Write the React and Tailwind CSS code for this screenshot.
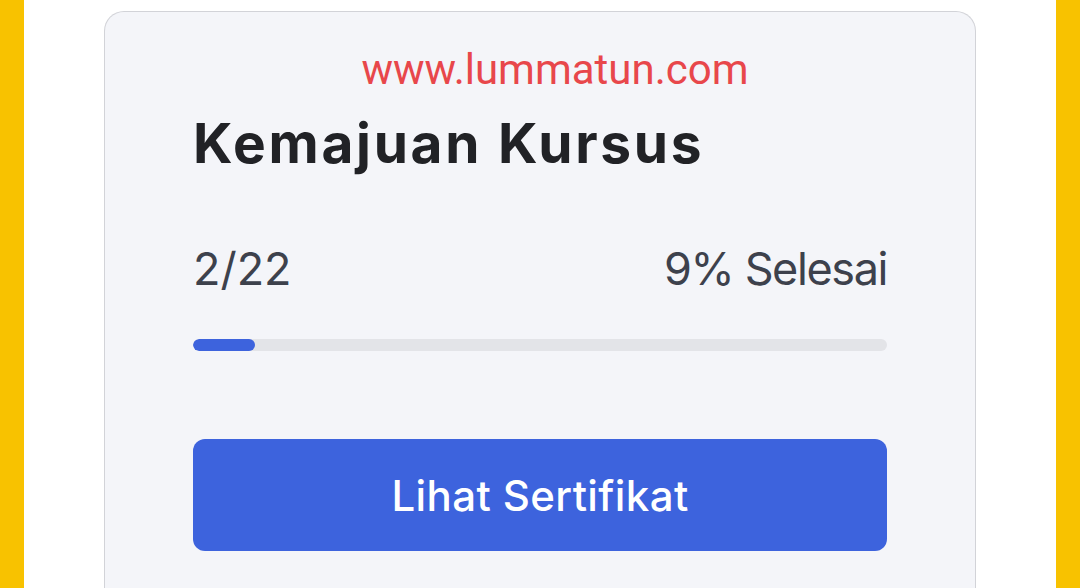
import React from 'react';

const ProgressCard = ({ done = 2, total = 22 }) => {
  const percent = Math.round((done / total) * 100);

  return (
    <div className="w-[872px] rounded-t-[20px] border border-b-0 border-[#d2d3d8] bg-[#f4f5f9] px-[88px] pt-[37px] pb-[40px]">
      <p className="pl-[30px] text-center text-[42px] leading-none text-[#e8474b] [font-family:Roboto,'Liberation_Sans',sans-serif]">
        www.lummatun.com
      </p>
      <h2 className="mt-[25px] text-[55px] font-bold leading-none tracking-[2.7px] text-[#212226]">
        Kemajuan Kursus
      </h2>
      <div className="mt-[75px] flex items-center justify-between text-[45px] leading-none text-[#3d414c]">
        <span>
          {done}/{total}
        </span>
        <span className="tracking-[-1.4px]">{percent}% Selesai</span>
      </div>
      <div className="mt-[48px] h-[12px] w-full overflow-hidden rounded-full bg-[#e3e4e8]">
        <div className="h-full rounded-full bg-[#3d63dd]" style={{ width: `${percent}%` }} />
      </div>
      <button
        type="button"
        className="mt-[88px] flex h-[112px] w-full items-center justify-center rounded-[12px] bg-[#3d63dd] text-[42px] font-medium tracking-[0.4px] text-white"
      >
        Lihat Sertifikat
      </button>
    </div>
  );
};

const App = () => {
  return (
    <div className="flex h-[588px] w-full overflow-hidden bg-white font-['Inter',sans-serif]">
      <div className="w-[24px] shrink-0 bg-[#f8c200]" />
      <div className="flex flex-1 bg-white pt-[11px] pl-[80px]">
        <ProgressCard />
      </div>
      <div className="w-[24px] shrink-0 bg-[#f8c200]" />
    </div>
  );
};

export default App;
